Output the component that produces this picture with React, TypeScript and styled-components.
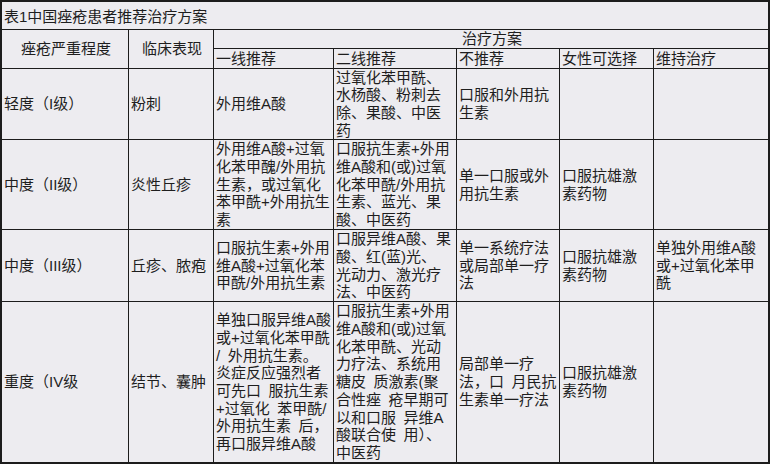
import React from "react";
import styled, { createGlobalStyle } from "styled-components";

const GlobalStyle = createGlobalStyle`
  html, body {
    margin: 0;
    padding: 0;
    background: #ffffff;
  }
  body {
    font-family: "Liberation Sans", "Noto Sans CJK SC", sans-serif;
  }
`;

const Sheet = styled.div`
  display: grid;
  grid-template-columns: 126px 84px 119px 122px 102px 93px 114px;
  grid-template-rows: 27px 18px 19px 70px 89px 71px 160px;
  gap: 1px;
  padding: 2px;
  width: 770px;
  height: 464px;
  box-sizing: border-box;
  background: #1c1c1c;
`;

const Cell = styled.div<{ $cols?: number; $rows?: number; $center?: boolean }>`
  grid-column: span ${(p) => p.$cols ?? 1};
  grid-row: span ${(p) => p.$rows ?? 1};
  background: #edecf0;
  color: #1e1e1e;
  font-family: "Liberation Sans", "Noto Sans CJK SC", sans-serif;
  font-size: 15px;
  line-height: 17.7px;
  padding: 0 0 0 2px;
  display: flex;
  flex-direction: column;
  justify-content: center;
  align-items: ${(p) => (p.$center ? "center" : "flex-start")};
  overflow: hidden;
`;

const TitleCell = styled(Cell)`
  padding-top: 3px;
`;

const Line = styled.span`
  display: block;
  white-space: pre;
`;

type Row = string[][];

const rows: Row[] = [
  [
    ["轻度（I级）"],
    ["粉刺"],
    ["外用维A酸"],
    ["过氧化苯甲酰、", "水杨酸、粉刺去", "除、果酸、中医", "药"],
    ["口服和外用抗", "生素"],
    [],
    [],
  ],
  [
    ["中度（II级）"],
    ["炎性丘疹"],
    ["外用维A酸+过氧", "化苯甲醜/外用抗", "生素，或过氧化", "苯甲酰+外用抗生", "素"],
    ["口服抗生素+外用", "维A酸和(或)过氧", "化苯甲酰/外用抗", "生素、蓝光、果", "酸、中医药"],
    ["单一口服或外", "用抗生素"],
    ["口服抗雄激", "素药物"],
    [],
  ],
  [
    ["中度（III级）"],
    ["丘疹、脓疱"],
    ["口服抗生素+外用", "维A酸+过氧化苯", "甲酰/外用抗生素"],
    ["口服异维A酸、果", "酸、红(蓝)光、", "光动力、激光疗", "法、中医药"],
    ["单一系统疗法", "或局部单一疗", "法"],
    ["口服抗雄激", "素药物"],
    ["单独外用维A酸", "或+过氧化苯甲", "酰"],
  ],
  [
    ["重度（IV级"],
    ["结节、囊肿"],
    [
      "单独口服异维A酸",
      "或+过氧化苯甲酰",
      "/ 外用抗生素。",
      "炎症反应强烈者",
      "可先口 服抗生素",
      "+过氧化 苯甲酰/",
      "外用抗生素 后，",
      "再口服异维A酸",
    ],
    [
      "口服抗生素+外用",
      "维A酸和(或)过氧",
      "化苯甲酰、光动",
      "力疗法、系统用",
      "糖皮 质激素(聚",
      "合性痤 疮早期可",
      "以和口服 异维A",
      "酸联合使 用）、",
      "中医药",
    ],
    ["局部单一疗", "法，口 月民抗", "生素单一疗法"],
    ["口服抗雄激", "素药物"],
    [],
  ],
];

const subHeaders = ["一线推荐", "二线推荐", "不推荐", "女性可选择", "维持治疗"];

const wide = (s: string) => s.replace(/ /g, "\u2002");

export default function App() {
  return (
    <>
      <GlobalStyle />
      <Sheet>
        <TitleCell $cols={7}>
          <Line>表1中国痤疮患者推荐治疗方案</Line>
        </TitleCell>

        <Cell $rows={2} $center>
          <Line>痤疮严重程度</Line>
        </Cell>
        <Cell $rows={2} $center>
          <Line>临床表现</Line>
        </Cell>
        <Cell $cols={5} $center>
          <Line>治疗方案</Line>
        </Cell>
        {subHeaders.map((h) => (
          <Cell key={h}>
            <Line>{h}</Line>
          </Cell>
        ))}

        {rows.map((row, ri) =>
          row.map((lines, ci) => (
            <Cell key={`${ri}-${ci}`}>
              {lines.map((l, li) => (
                <Line key={li}>{wide(l)}</Line>
              ))}
            </Cell>
          ))
        )}
      </Sheet>
    </>
  );
}
